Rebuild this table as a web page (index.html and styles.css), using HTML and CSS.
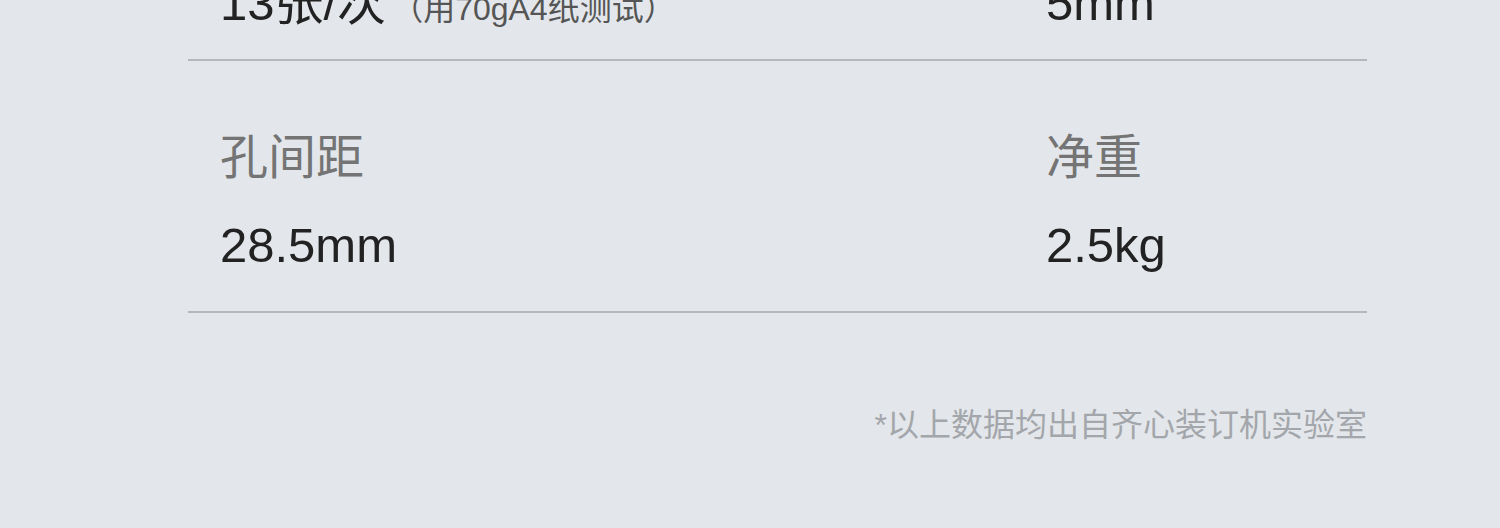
FILE: index.html
```html
<!DOCTYPE html>
<html lang="zh-CN">
<head>
  <meta charset="UTF-8" />
  <meta name="viewport" content="width=device-width, initial-scale=1" />
  <title>产品参数</title>
  <link rel="stylesheet" href="styles.css">
</head>
<body>

  <!-- 参数表 -->
  <div class="specs">
    <div class="row row-top">
      <div class="cell">
        <div class="value">13张/次<span class="note">（用70gA4纸测试）</span></div>
      </div>
      <div class="cell">
        <div class="value">5mm</div>
      </div>
    </div>

    <div class="row">
      <div class="cell">
        <div class="label">孔间距</div>
        <div class="value">28.5mm</div>
      </div>
      <div class="cell">
        <div class="label">净重</div>
        <div class="value">2.5kg</div>
      </div>
    </div>

    <p class="source">*以上数据均出自齐心装订机实验室</p>
  </div>

</body>
</html>
```

FILE: styles.css
```css
body {
  margin: 0; background: #e3e7eb;
  font-family: 'Liberation Sans', 'Noto Sans CJK SC', sans-serif;
  overflow: hidden;
}
.specs { width: 1179px; margin-left: 188px; }
.row {
  display: grid; grid-template-columns: 826px 1fr;
  padding: 73px 32px 42px; border-bottom: 2px solid #b4b8bc;
}
.row-top { margin-top: -21px; padding-top: 0; padding-bottom: 26px; }
.label { font-size: 48px; line-height: 48px; color: #747474; }
.value { font-size: 49px; line-height: 48px; color: #222; margin-top: 39px; }
.row-top .value { margin-top: 0; }
.note { font-size: 32px; color: #555; margin-left: 5px; }
.source {
  margin: 96px 0 0; text-align: right;
  font-size: 32px; line-height: 32px; color: #a3a6aa;
}
```
